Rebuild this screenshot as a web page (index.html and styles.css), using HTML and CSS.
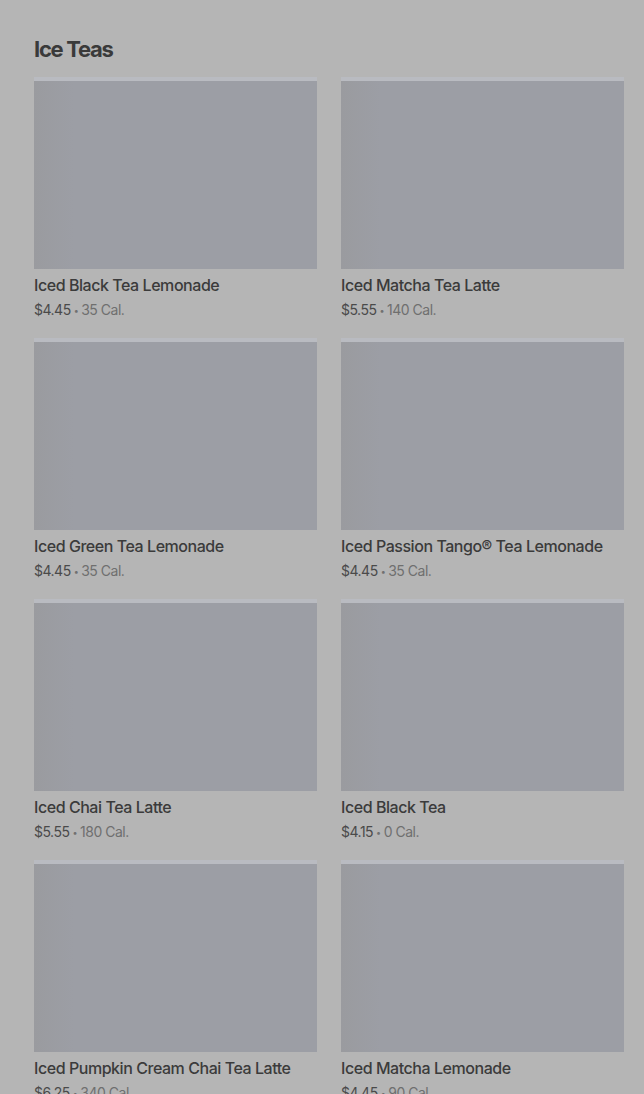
FILE: index.html
```html
<!DOCTYPE html>
<html>
<head>
<meta charset="utf-8">
<link rel="stylesheet" href="styles.css">
</head>
<body>
<main class="page">
  <h1 class="heading">Ice Teas</h1>
  <div class="grid">
    <div class="card"><div class="thumb"></div><div class="name">Iced Black Tea Lemonade</div><div class="meta"><span class="price">$4.45</span><span class="dot">•</span><span class="cal">35 Cal.</span></div></div>
    <div class="card"><div class="thumb"></div><div class="name">Iced Matcha Tea Latte</div><div class="meta"><span class="price">$5.55</span><span class="dot">•</span><span class="cal">140 Cal.</span></div></div>
    <div class="card"><div class="thumb"></div><div class="name">Iced Green Tea Lemonade</div><div class="meta"><span class="price">$4.45</span><span class="dot">•</span><span class="cal">35 Cal.</span></div></div>
    <div class="card"><div class="thumb"></div><div class="name">Iced Passion Tango® Tea Lemonade</div><div class="meta"><span class="price">$4.45</span><span class="dot">•</span><span class="cal">35 Cal.</span></div></div>
    <div class="card"><div class="thumb"></div><div class="name">Iced Chai Tea Latte</div><div class="meta"><span class="price">$5.55</span><span class="dot">•</span><span class="cal">180 Cal.</span></div></div>
    <div class="card"><div class="thumb"></div><div class="name">Iced Black Tea</div><div class="meta"><span class="price">$4.15</span><span class="dot">•</span><span class="cal">0 Cal.</span></div></div>
    <div class="card"><div class="thumb"></div><div class="name">Iced Pumpkin Cream Chai Tea Latte</div><div class="meta"><span class="price">$6.25</span><span class="dot">•</span><span class="cal">340 Cal.</span></div></div>
    <div class="card"><div class="thumb"></div><div class="name">Iced Matcha Lemonade</div><div class="meta"><span class="price">$4.45</span><span class="dot">•</span><span class="cal">90 Cal.</span></div></div>
  </div>
</main>
</body>
</html>
```
FILE: styles.css
```css
html, body {
  margin: 0;
  padding: 0;
  background: #b5b5b5;
  height: 100%;
  overflow: hidden;
}
.page {
  padding: 35px 20px 0 34px;
  font-family: Inter, "Noto Sans", "Liberation Sans", sans-serif;
}
.heading {
  margin: 0 0 18px 0;
  font-size: 22px;
  line-height: 28px;
  font-weight: 700;
  letter-spacing: -1.3px;
  color: #3a3a3a;
}
.grid {
  display: grid;
  grid-template-columns: 283px 283px;
  column-gap: 24px;
  row-gap: 22px;
}
.thumb {
  height: 188px;
  background: linear-gradient(90deg, #9a9b9f 0px, #9c9ea5 40px, #9c9ea5 100%);
  box-shadow: 0 -4px 0 #b9bbc1;
}
.name {
  margin-top: 6px;
  font-size: 16px;
  line-height: 20px;
  height: 20px;
  font-weight: 500;
  color: #3b3b3b;
  letter-spacing: -0.45px;
  white-space: nowrap;
}
.meta {
  margin-top: 5px;
  display: flex;
  align-items: center;
  height: 20px;
  font-size: 14px;
  line-height: 20px;
  color: #4a4a4a;
  letter-spacing: -0.5px;
}
.dot {
  color: #707070;
  font-size: 9px;
  line-height: 1;
  margin: 0 3px;
}
.cal {
  color: #6f6f6f;
}
```
